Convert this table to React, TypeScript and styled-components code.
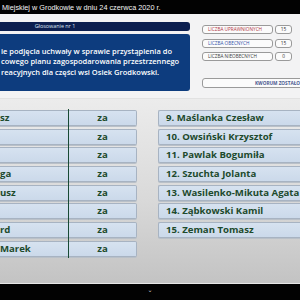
import React from 'react';
import styled, { createGlobalStyle } from 'styled-components';

const GlobalStyle = createGlobalStyle`
  html, body {
    margin: 0;
    padding: 0;
    width: 300px;
    height: 300px;
    overflow: hidden;
    background: #000;
  }
`;

const leftVotes = ['sz', '', '', 'ga', 'usz', '', 'rd', 'Marek'];

const rightNames = [
  '9. Maślanka Czesław',
  '10. Owsiński Krzysztof',
  '11. Pawlak Bogumiła',
  '12. Szuchta Jolanta',
  '13. Wasilenko-Mikuta Agata',
  '14. Ząbkowski Kamil',
  '15. Zeman Tomasz',
];

const stats = [
  { label: 'LICZBA UPRAWNIONYCH', value: '15', tone: '#b0343f' },
  { label: 'LICZBA OBECNYCH', value: '15', tone: '#3552a8' },
  { label: 'LICZBA NIEOBECNYCH', value: '0', tone: '#3a3a3a' },
];

const App = () => {
  return (
    <>
      <GlobalStyle />
      <Screen>
        <TopBar>Miejskiej w Grodkowie w dniu 24 czerwca 2020 r.</TopBar>

        <Header>
          <LeftHead>
            <VoteTitle>Głosowanie nr 1</VoteTitle>
            <Subject>
              <span>ie podjęcia uchwały w sprawie przystąpienia do</span>
              <span>cowego planu zagospodarowania przestrzennego</span>
              <span>reacyjnych dla części wsi Osiek Grodkowski.</span>
            </Subject>
          </LeftHead>

          <StatsPanel>
            {stats.map((s) => (
              <StatRow key={s.label}>
                <StatLabel $tone={s.tone}>{s.label}</StatLabel>
                <StatValue>{s.value}</StatValue>
              </StatRow>
            ))}
            <Quorum>KWORUM ZOSTAŁO</Quorum>
          </StatsPanel>
        </Header>

        <Board>
          <LeftList>
            <NameColumn>
              {leftVotes.map((n, i) => (
                <NameCell key={i}>{n}</NameCell>
              ))}
            </NameColumn>
            <VoteColumn>
              {leftVotes.map((_, i) => (
                <VoteCell key={i}>za</VoteCell>
              ))}
            </VoteColumn>
          </LeftList>

          <RightList>
            {rightNames.map((n) => (
              <PersonCell key={n}>{n}</PersonCell>
            ))}
          </RightList>
        </Board>

        <BottomBar>
          <Caret>⌄</Caret>
        </BottomBar>
      </Screen>
    </>
  );
};

const TEXT_GREEN = '#1d4a2c';

const Screen = styled.div`
  width: 300px;
  height: 300px;
  display: flex;
  flex-direction: column;
  overflow: hidden;
  font-family: 'Open Sans', 'Liberation Sans', sans-serif;
`;

const TopBar = styled.div`
  height: 14px;
  flex: none;
  background: #020202;
  color: #f4f4f4;
  font-family: 'Liberation Sans', Arial, sans-serif;
  font-size: 7.3px;
  line-height: 15px;
  padding-left: 2px;
  white-space: nowrap;
`;

const Header = styled.div`
  height: 85px;
  flex: none;
  display: flex;
  background: #f3f3f4;
  border-bottom: 1px solid #e2e2e2;
  box-sizing: border-box;
  padding-top: 8px;
`;

const LeftHead = styled.div`
  width: 190px;
  display: flex;
  flex-direction: column;
  gap: 3px;
`;

const VoteTitle = styled.div`
  height: 9px;
  background: #0c1f4f;
  border-radius: 0 3px 3px 0;
  color: #dfe6f3;
  font-size: 5.4px;
  line-height: 9px;
  text-align: center;
  padding-right: 80px;
`;

const Subject = styled.div`
  height: 55px;
  background: #0d3c7e;
  border-radius: 0 3px 3px 0;
  color: #ffffff;
  font-size: 7.5px;
  font-weight: 600;
  line-height: 10.5px;
  display: flex;
  flex-direction: column;
  justify-content: center;
  padding: 0 0 2px 1px;
  white-space: nowrap;
  overflow: hidden;
`;

const StatsPanel = styled.div`
  flex: 1;
  padding: 3px 0 0 12px;
  display: flex;
  flex-direction: column;
  gap: 4.5px;
  overflow: hidden;
`;

const StatRow = styled.div`
  display: flex;
  gap: 2px;
  height: 9px;
`;

const StatLabel = styled.div<{ $tone: string }>`
  width: 71px;
  box-sizing: border-box;
  border: 1px solid #9a9a9a;
  border-radius: 3px;
  background: #fbfbfb;
  color: ${({ $tone }) => $tone};
  font-size: 4.7px;
  line-height: 7px;
  padding-left: 5px;
  white-space: nowrap;
`;

const StatValue = styled.div`
  width: 17px;
  box-sizing: border-box;
  border: 1px solid #9a9a9a;
  border-radius: 3px;
  background: #fbfbfb;
  color: #333;
  font-size: 4.8px;
  line-height: 7px;
  text-align: center;
`;

const Quorum = styled.div`
  margin-top: 12px;
  height: 10px;
  width: 140px;
  flex: none;
  box-sizing: border-box;
  border: 1px solid #9a9a9a;
  border-radius: 3px;
  background: #fbfbfb;
  color: #4a5890;
  font-size: 4.7px;
  font-weight: 700;
  line-height: 8px;
  padding-left: 52px;
  white-space: nowrap;
`;

const Board = styled.div`
  flex: 1;
  display: flex;
  gap: 21px;
  padding-top: 10px;
  background: linear-gradient(#ececec, #d9d9d9 55%, #c3c3c3);
  border-bottom: 1px solid #e6e6e6;
`;

const LeftList = styled.div`
  width: 137px;
  display: flex;
`;

const NameColumn = styled.div`
  width: 68px;
  display: flex;
  flex-direction: column;
  gap: 2.7px;
  padding-top: 1px;
`;

const VoteColumn = styled.div`
  width: 68px;
  display: flex;
  flex-direction: column;
  gap: 2.7px;
  padding: 1px 0 1px;
  border-left: 1px solid #184a34;
  align-self: flex-start;
`;

const Cell = styled.div`
  height: 16px;
  box-sizing: border-box;
  background: linear-gradient(#d6e2f0, #cbd9ea);
  border: 1px solid #a7b3c2;
  box-shadow: 0 1px 0 #b9c0c8;
  color: ${TEXT_GREEN};
  font-size: 9.6px;
  font-weight: 700;
  line-height: 14px;
  white-space: nowrap;
  overflow: hidden;
`;

const NameCell = styled(Cell)`
  border-left: none;
  border-right: none;
  padding-left: 0;
`;

const VoteCell = styled(Cell)`
  border-left: none;
  border-radius: 0 2px 2px 0;
  text-align: center;
`;

const RightList = styled.div`
  flex: 1;
  display: flex;
  flex-direction: column;
  gap: 2.7px;
  padding-top: 1px;
`;

const PersonCell = styled(Cell)`
  border-right: none;
  border-radius: 2px 0 0 2px;
  padding-left: 7px;
`;

const BottomBar = styled.div`
  height: 16px;
  flex: none;
  background: #020202;
  display: flex;
  justify-content: center;
`;

const Caret = styled.span`
  color: #cfcfcf;
  font-family: 'DejaVu Sans', sans-serif;
  font-size: 6px;
  line-height: 12px;
`;

export default App;
